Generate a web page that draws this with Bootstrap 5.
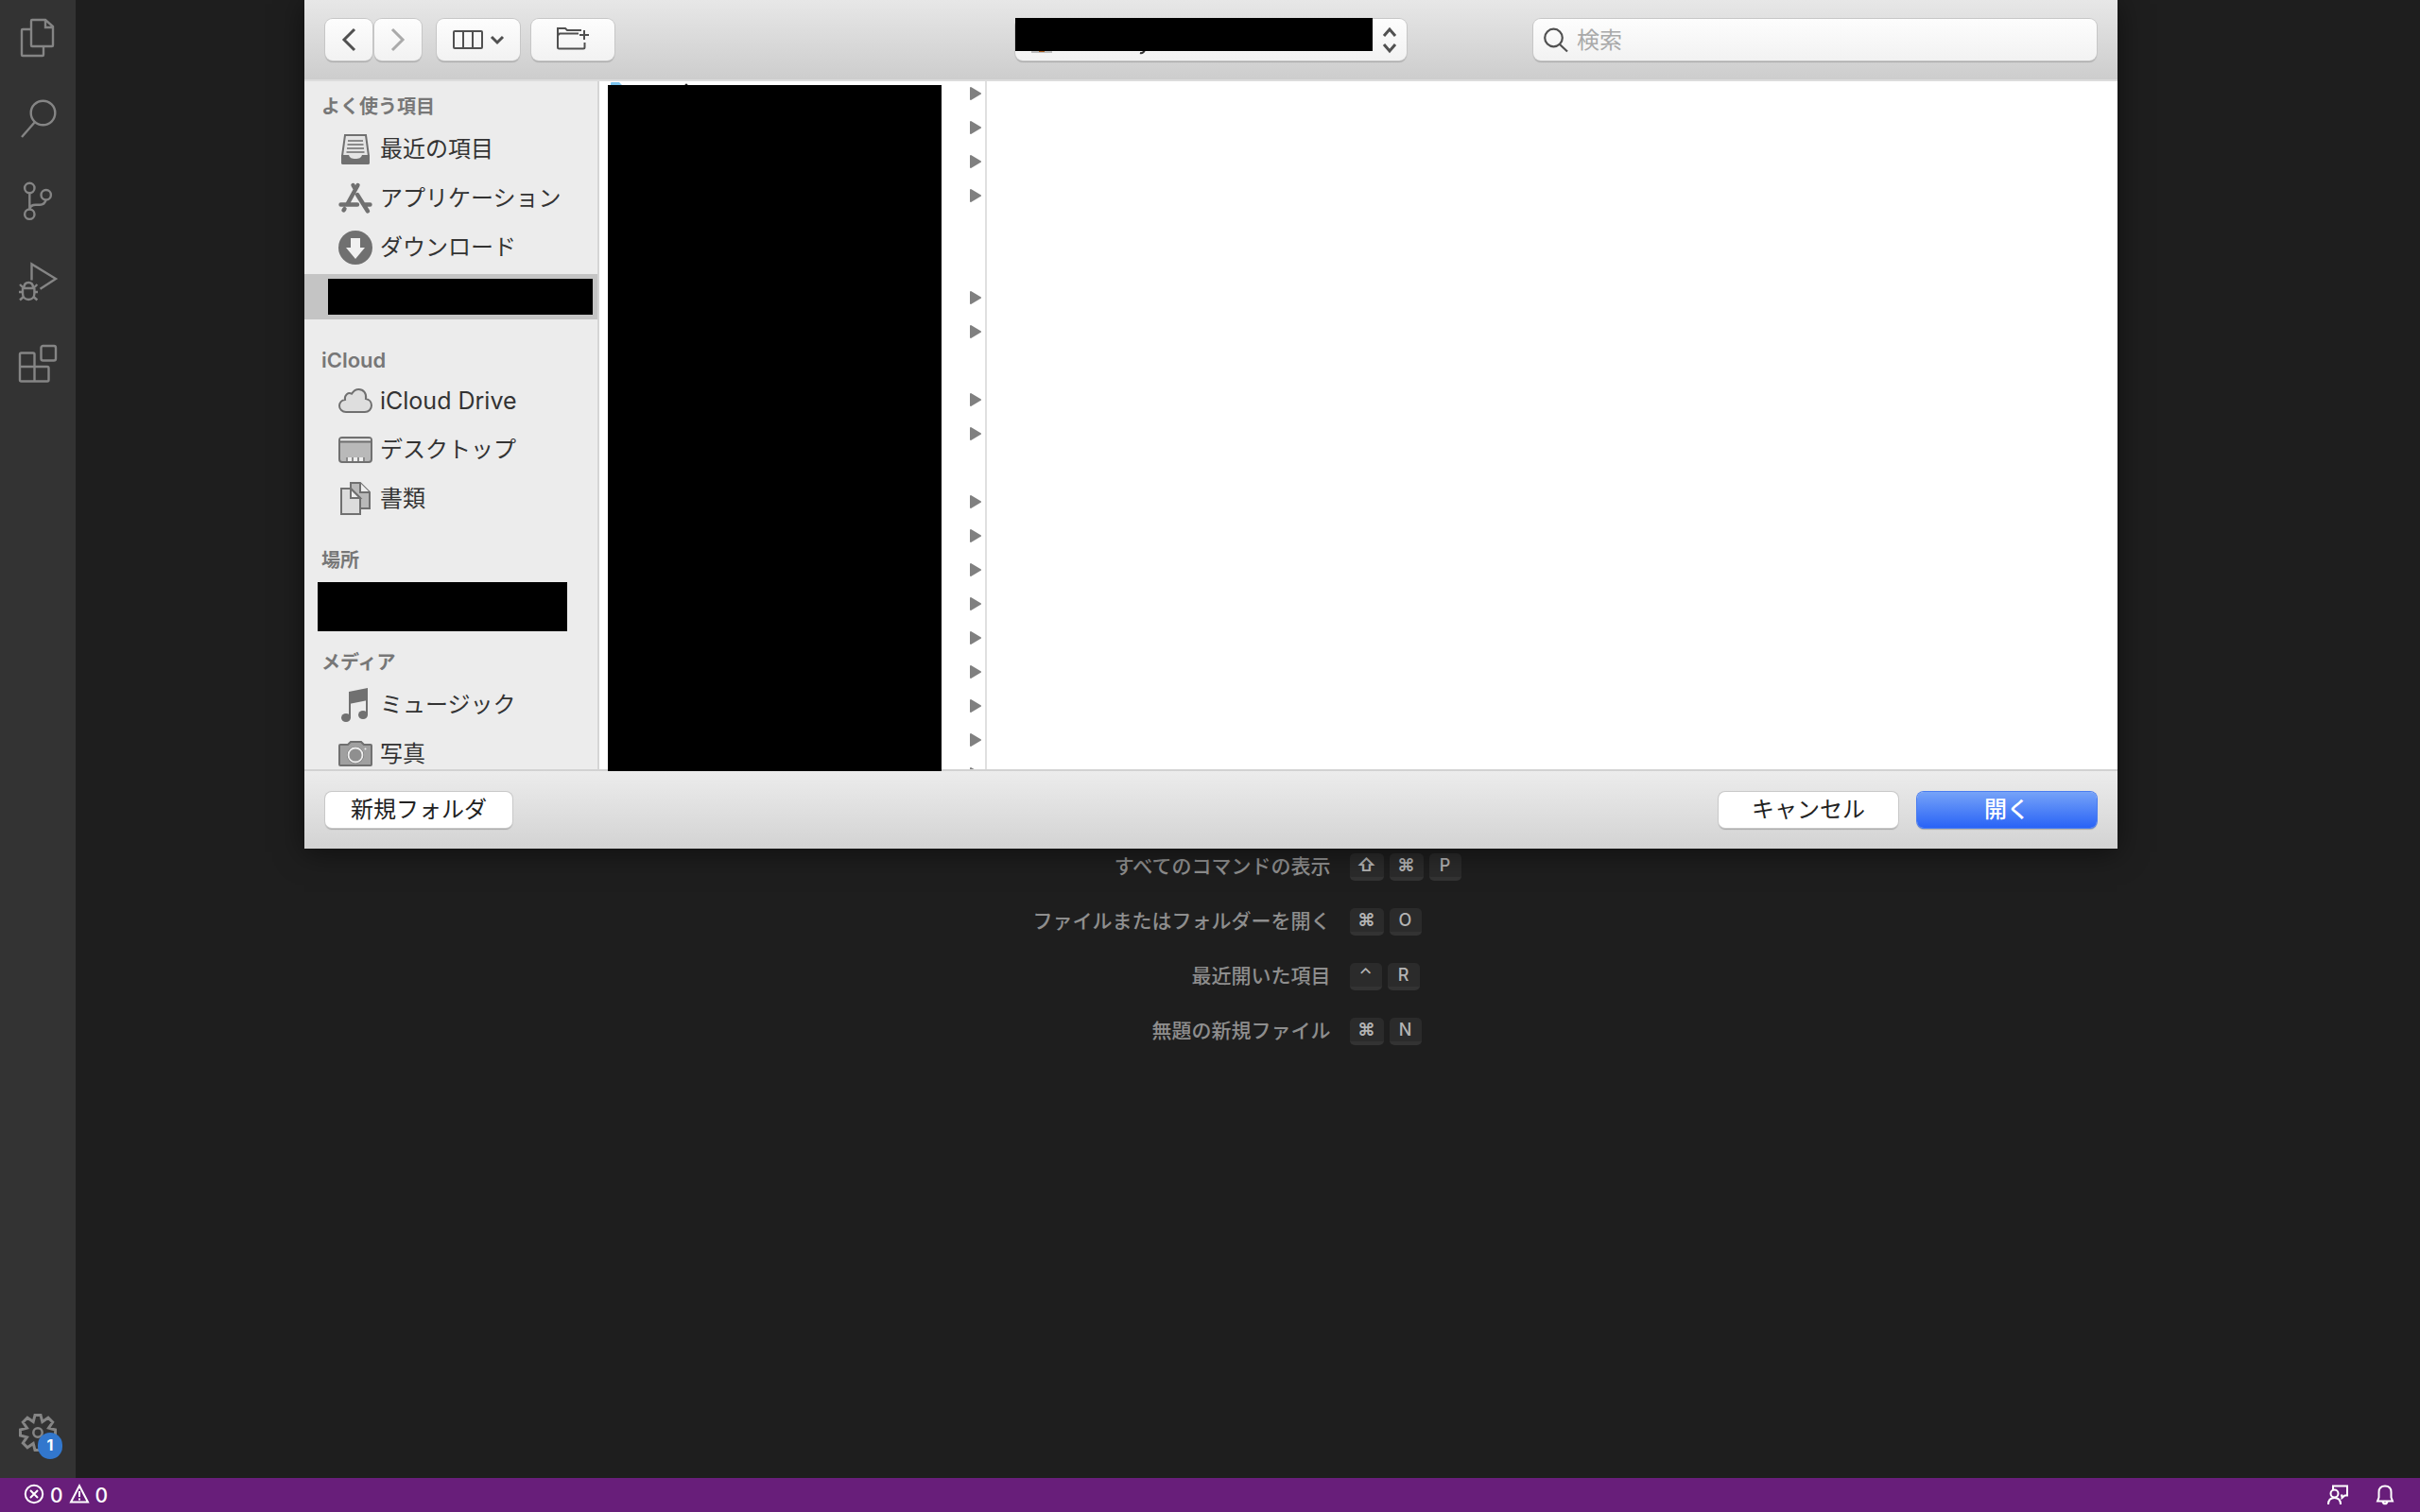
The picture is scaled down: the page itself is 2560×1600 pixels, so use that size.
<!DOCTYPE html>
<html lang="ja">
<head>
<meta charset="utf-8">
<meta name="viewport" content="width=device-width, initial-scale=1">
<title>フォルダーを開く</title>
<link href="https://cdn.jsdelivr.net/npm/bootstrap@5.3.0/dist/css/bootstrap.min.css" rel="stylesheet">
<style>
body{background:#1e1e1e;font-family:Inter,"Noto Sans CJK JP",sans-serif;font-size:24px;line-height:32px;color:#333}
svg{display:block;flex:none}
.activity{width:80px;background:#333;padding:20px 0 28px;color:#858585}
.activity nav{gap:46px}
.activity .line-icon{stroke-width:2.4}
.act-btn{background:none;border:0;padding:0;color:inherit;width:40px;height:40px;position:relative}
.act-count{position:absolute;left:20px;top:20px;width:26px;height:28px;border-radius:13px;background:#3277cd;color:#fff;font-size:16px;font-weight:700;line-height:26px;text-align:center}
.line-icon{fill:none;stroke:currentColor;stroke-width:2;overflow:visible}
.hints{padding:888px 2px 0 0;display:grid;grid-template-columns:auto auto;justify-content:center;column-gap:20px;grid-auto-rows:58px;align-items:center;color:#8e8e8e;font-size:21px;font-weight:500}
.hints dt{font-weight:500;text-align:right}
.hints dd{gap:6px}
.key{background:#2b2b2b;border-bottom:4px solid #333;border-radius:5px;color:#b4b4b4;font:500 18px/26px Inter,"DejaVu Sans",sans-serif;height:29px;padding:0;min-width:34px;text-align:center}
.key-sym{min-width:36px;font-size:19px;font-weight:700}
.status{height:36px;background:#681e7a;color:#fff;padding:0 28px 0 26px;font-size:21px}
.status-item{color:#fff;text-decoration:none;gap:7px;font-weight:500}
.status-item span{padding-top:2px}
.dialog-open{position:absolute;left:322px;right:320px;top:0;box-shadow:0 4px 28px rgba(0,0,0,.5);background:#fff;color:#333}
.toolbar{height:86px;padding:0 22px;background:linear-gradient(#e7e7e7,#cdcdcd);border-bottom:2px solid #dcdcdc}
.tools{gap:12px}
.nav-pair{gap:2px;margin-right:4px}
.mac-btn,.mac-field{background:linear-gradient(#fdfdfd,#f2f2f2);border:0;border-radius:8px;height:44px;padding:0;color:#505050;box-shadow:0 0 0 1px #c6c6c6,0 2px 1px #aaa}
.w-nav{width:50px}.w-tool{width:88px}
.place{width:414px;position:relative}
.place select{width:100%;appearance:none}
.place-mask{position:absolute;left:0;top:-1px;width:378px;height:35px;background:#000}
.place-art{position:absolute;inset:0;pointer-events:none}
.search{width:596px;padding-left:11px;gap:9px}
.search input{background:none;border:0;outline:0;padding:0;height:44px;flex:1;color:#333}
.search input::placeholder{color:#a9a9a9;opacity:1}
.browser{height:728px}
.sidebar{width:312px;background:#ececec;border-right:2px solid #d5d5d5;padding-top:8px;overflow:hidden;color:#333}
.side-head{font-size:20px;font-weight:600;line-height:38px;height:40px;margin:22px 0 0;padding-left:18px;color:#777}
.side-head:first-child{margin-top:0}
.head-latin{font-size:22px;line-height:42px}
.side-row{height:48px;margin-bottom:4px;padding-left:36px;gap:8px;color:#333;text-decoration:none}
.row-latin{font-size:25px}
.side-row.on{background:#c4c4c4;padding:0 5px 4px 25px}
.mask-row{background:#000;height:38px}
.mask-drive{background:#000;height:52px;margin:2px 32px 14px 14px}
.side-icon{color:#707070}
.column{width:410px;border-right:2px solid #e0e0e0;position:relative}
.rows{overflow:hidden;height:728px}
.rows ul{margin:-5px 0 0}
.rows li{height:36px;padding-right:4px}
.mask-files{position:absolute;left:9px;top:4px;width:353px;height:726px;background:#000}
.peek{position:absolute;left:12px;top:1px}
.dfoot{border-top:2px solid #d2d2d2;height:84px;padding:0 22px;background:linear-gradient(#ececec,#d3d3d3);gap:20px}
.mac-push{height:38px;border:0;border-radius:7px;background:#fff;color:#222;box-shadow:0 0 0 1px #c8c8c8,0 2px 1px #aaa;padding:0 27px}
.w-push{width:190px;padding:0}
.mac-primary{background:linear-gradient(#76a3f8,#2963f6);color:#fff;box-shadow:0 0 0 1px #4a7df0,0 2px 1px #aaa;font-weight:500}
</style>
</head>
<body>
<div class="vh-100 d-flex flex-column position-relative overflow-hidden">
  <div class="d-flex flex-grow-1">
    <aside class="activity d-flex flex-column align-items-center justify-content-between">
      <nav class="d-flex flex-column">
        <button class="act-btn" aria-label="エクスプローラー"><svg class="line-icon" width="40" height="40"><path d="M14 1h14l8 7v20q0 1-1 1H14q-1 0-1-1V2q0-1 1-1zM28 1v8h8M12 11H4q-1 0-1 1v26q0 1 1 1h21q1 0 1-1v-8"/></svg></button>
        <button class="act-btn" aria-label="検索"><svg class="line-icon" width="40" height="40"><circle cx="25.500" cy="13.500" r="12.800"/><path d="M17 23L3 39"/></svg></button>
        <button class="act-btn" aria-label="ソース管理"><svg class="line-icon" width="40" height="40"><circle cx="11.300" cy="7" r="5.200"/><circle cx="28.700" cy="14.200" r="5.200"/><circle cx="11.300" cy="34.700" r="5.200"/><path d="M11.300 12.200V29.500M28.700 19.400c-1 3.500-3 5.300-6.500 5.300h-4.500c-3.500 0-5.700 1-6.400 4.500"/></svg></button>
        <button class="act-btn" aria-label="実行とデバッグ"><svg class="line-icon" width="40" height="40"><path d="M13.500 18.500V1.500L39 17 22.500 27.800"/><path d="M3.500 27h13.500M4 27v5.500c0 4 2.500 6.500 6.200 6.500s6.200-2.500 6.200-6.500V27M5.300 27c0-4 2-6 4.900-6s4.900 2 4.900 6M0 31h4m12.500 0H20M1 23l3.500 3.500M19.400 23l-3.500 3.500M1 39.500L5 36m14.400 3.500l-4-3.500"/></svg></button>
        <button class="act-btn" aria-label="拡張機能"><svg class="line-icon" width="40" height="40"><path d="M2.500 9.500h12.500q1.500 0 1.500 1.500v13H30q1.500 0 1.500 1.500V38q0 1.500-1.500 1.500H2.500Q1 39.500 1 38V11q0-1.500 1.500-1.500zM1 24h15.500v15.500"/><rect x="23.500" y="2" width="15.500" height="15.500" rx="2"/></svg></button>
      </nav>
      <button class="act-btn" aria-label="管理"><svg class="line-icon" width="40" height="40"><path stroke-width="3" d="M17 1.500h6l1.800 7L31 4.300 35.700 9l-4.200 6.200 7 1.800v6l-7 1.800 4.200 6.200-4.700 4.700-6.200-4.200-1.800 7h-6l-1.800-7L9 35.700 4.300 31l4.200-6.200-7-1.800v-6l7-1.800L4.300 9 9 4.300l6.200 4.200z"/><circle cx="20" cy="20" r="4.700" stroke-width="2.500"/></svg><span class="act-count">1</span></button>
    </aside>
    <main class="flex-grow-1">
      <dl class="hints mb-0">
        <dt>すべてのコマンドの表示</dt><dd class="d-flex mb-0"><kbd class="key key-sym">⇧</kbd><kbd class="key key-sym">⌘</kbd><kbd class="key">P</kbd></dd>
        <dt>ファイルまたはフォルダーを開く</dt><dd class="d-flex mb-0"><kbd class="key key-sym">⌘</kbd><kbd class="key">O</kbd></dd>
        <dt>最近開いた項目</dt><dd class="d-flex mb-0"><kbd class="key">⌃</kbd><kbd class="key">R</kbd></dd>
        <dt>無題の新規ファイル</dt><dd class="d-flex mb-0"><kbd class="key key-sym">⌘</kbd><kbd class="key">N</kbd></dd>
      </dl>
    </main>
  </div>

  <footer class="status d-flex align-items-center justify-content-between">
    <a href="#" class="status-item d-flex align-items-center">
      <svg class="line-icon" width="20" height="22" stroke-width="1.500"><circle cx="10" cy="10" r="9.200"/><path d="M6 6l8 8M14 6l-8 8"/></svg><span>0</span>
      <svg class="line-icon" width="20" height="22" stroke-width="1.500"><path d="M10 1.200L19 18.500H1zM10 7v6M10 14.500v2"/></svg><span>0</span>
    </a>
    <div class="d-flex gap-4">
      <a href="#" class="status-item" aria-label="フィードバック"><svg class="line-icon" width="28" height="22"><path d="M6 5V1.500h15v10h-2.500L15.500 14v-2.500H14"/><circle cx="7.500" cy="9.500" r="4"/><path d="M1 21c0-4.500 2.500-7 6.500-7s6.500 2.500 6.500 7"/></svg></a>
      <a href="#" class="status-item" aria-label="通知"><svg class="line-icon" width="18" height="22"><path d="M1 17.500l1.500-4V8c0-4.300 2.500-6.500 6.500-6.500S15.500 3.700 15.500 8v5.500l1.500 4zM6.500 18c.5 3 4.500 3 5 0"/></svg></a>
    </div>
  </footer>

  <section class="dialog-open" role="dialog" aria-label="開く">
    <header class="toolbar d-flex align-items-center">
      <div class="tools d-flex flex-fill" style="flex-basis:0!important">
        <div class="nav-pair d-flex">
          <button class="mac-btn w-nav d-flex align-items-center justify-content-center" aria-label="戻る"><svg class="line-icon" width="16" height="26" style="stroke-width:3"><path d="M14 2L3 13l11 11"/></svg></button>
          <button class="mac-btn w-nav d-flex align-items-center justify-content-center" aria-label="進む" disabled><svg class="line-icon" width="16" height="26" style="stroke-width:3;color:#aaa"><path d="M2 2l11 11L2 24"/></svg></button>
        </div>
        <button class="mac-btn w-tool d-flex align-items-center justify-content-center gap-2" aria-label="表示"><svg class="line-icon" width="32" height="20"><rect x="1" y="1" width="30" height="18" rx="1"/><path d="M11 1v18M21 1v18"/></svg><svg class="line-icon" width="14" height="10" style="stroke-width:3"><path d="M1 2l6 6 6-6"/></svg></button>
        <button class="mac-btn w-tool d-flex align-items-center justify-content-center" aria-label="新規フォルダを作成"><svg class="line-icon" width="36" height="28"><path d="M27 4H12L10 2H2v20q0 1.500 1.500 1.500H29q1.500 0 1.500-1.500v-5M2 9.500l2-2h20M30 4v10M25 9h10"/></svg></button>
      </div>
      <div class="place">
        <select class="mac-btn" aria-label="場所"><option></option></select>
        <svg class="place-art line-icon" width="414" height="44" style="color:#505050;stroke-width:3"><path d="M390 18l6-7 6 7M390 27l6 7 6-7"/><path d="M17 35h22" stroke="#bbb" stroke-width="2"/><path d="M25 34h6" stroke="#a85a1c" stroke-width="2"/><path d="M132 36q3 1 5-3" stroke="#333" stroke-width="2"/></svg>
        <span class="place-mask"></span>
      </div>
      <div class="d-flex flex-fill justify-content-end" style="flex-basis:0!important">
        <label class="mac-field search d-flex align-items-center"><svg class="line-icon" width="26" height="26" style="stroke-width:2.200"><circle cx="10.500" cy="11" r="9.300"/><path d="M17 18l8 7.500"/></svg><input type="search" placeholder="検索" aria-label="検索"></label>
      </div>
    </header>

    <div class="browser d-flex">
      <nav class="sidebar flex-shrink-0">
        <h6 class="side-head">よく使う項目</h6>
        <a href="#" class="side-row d-flex align-items-center"><svg class="side-icon" width="36" height="36"><path d="M7 3h22l3 22v7q0 1-1 1H5q-1 0-1-1v-7z" fill="#e4e4e4" stroke="currentColor" stroke-width="2"/><path d="M10 9h16M9.500 13h17M9 17h18M8.500 21h19" stroke="#8a8a8a" stroke-width="2"/><path d="M3 24h8c1 3 3 4 7 4s6-1 7-4h8v8q0 2-2 2H5q-2 0-2-2z" fill="currentColor"/></svg>最近の項目</a>
        <a href="#" class="side-row d-flex align-items-center"><svg class="side-icon" width="36" height="36" fill="none" stroke="currentColor" stroke-width="4.400" stroke-linecap="round"><path d="M20.500 4L10 23M2.500 24.500H20M5.500 30.500l1-1.500M15.500 4l2 3.500M20 14l11 17.500M27 24.500h6.500"/></svg>アプリケーション</a>
        <a href="#" class="side-row d-flex align-items-center"><svg class="side-icon" width="36" height="36"><circle cx="18" cy="18" r="18" fill="currentColor"/><path d="M13 8h10v10h5L18 30 8 18h5z" fill="#f0f0f0"/></svg>ダウンロード</a>
        <a href="#" class="side-row on d-flex align-items-center" aria-label="ホーム"><span class="mask-row flex-grow-1 mt-1"></span></a>
        <h6 class="side-head head-latin">iCloud</h6>
        <a href="#" class="side-row row-latin d-flex align-items-center"><svg class="side-icon" width="36" height="36"><path d="M8 30C4 30 1 27 1 23.500c0-3.300 2.500-6 6-6.500-1-5 3.500-8.500 7-6.300C16 7.500 18.500 6 21.500 6c5 0 8.500 4.500 7.500 10 3.500.5 6 3.500 6 7 0 4-3 7-7 7z" fill="#dedede" stroke="currentColor" stroke-width="2"/></svg>iCloud Drive</a>
        <a href="#" class="side-row d-flex align-items-center"><svg class="side-icon" width="36" height="36"><rect x="1" y="5" width="34" height="26" rx="3" fill="#b9b9b9" stroke="currentColor" stroke-width="2"/><path d="M2 7.500h32" stroke="#eee" stroke-width="2"/><path d="M1 9.500h34" stroke="currentColor" stroke-width="2"/><path d="M8 30v-4h20v4" fill="#8a8a8a"/><path d="M10 28h4m2 0h4m2 0h4" stroke="#eee" stroke-width="4"/></svg>デスクトップ</a>
        <a href="#" class="side-row d-flex align-items-center"><svg class="side-icon" width="36" height="36" stroke="currentColor" stroke-width="2"><path d="M13 1h10l10 10v17H13z" fill="#b9b9b9"/><path d="M23 1v10h10" fill="#eee"/><path d="M3 7h10l10 10v17H3z" fill="#dcdcdc"/><path d="M13 7v10h10z" fill="#eee"/></svg>書類</a>
        <h6 class="side-head">場所</h6>
        <div class="mask-drive"></div>
        <h6 class="side-head mt-0">メディア</h6>
        <a href="#" class="side-row d-flex align-items-center"><svg class="side-icon" width="36" height="36" fill="currentColor"><path d="M11 4l20-4v13l-20 4z"/><path d="M11 4h2v28h-2zM29 2h2v27h-2z"/><ellipse cx="8" cy="31.500" rx="5" ry="4.500"/><ellipse cx="26" cy="28.500" rx="5" ry="4.500"/></svg>ミュージック</a>
        <a href="#" class="side-row d-flex align-items-center"><svg class="side-icon" width="36" height="36"><path d="M1 9q0-1 1-1h8l3-3h11l3 3h7q1 0 1 1v20q0 1-1 1H2q-1 0-1-1z" fill="#a0a0a0" stroke="currentColor" stroke-width="2"/><circle cx="18" cy="19" r="9" fill="#707070"/><circle cx="18" cy="19" r="7.500" fill="#8f8f8f" stroke="#eee" stroke-width="1.800"/><circle cx="28.500" cy="12.500" r="1" fill="#eee"/></svg>写真</a>
      </nav>
      <div class="column flex-shrink-0">
        <svg class="peek" width="90" height="4"><path d="M0 4V1q0-1 1-1h8l3 3h17v1z" fill="#7cc4ee"/><circle cx="80" cy="3" r="1.500" fill="#222"/></svg>
        <div class="rows"><ul class="list-unstyled" id="fileRows"></ul></div>
        <div class="mask-files"></div>
      </div>
      <div class="flex-grow-1 bg-white"></div>
    </div>

    <footer class="dfoot d-flex align-items-center">
      <button class="mac-push me-auto">新規フォルダ</button>
      <button class="mac-push w-push">キャンセル</button>
      <button class="mac-push w-push mac-primary">開く</button>
    </footer>
  </section>
</div>
<script src="https://cdn.jsdelivr.net/npm/bootstrap@5.3.0/dist/js/bootstrap.bundle.min.js"></script>
<script>
// Rows that are folders carry a disclosure arrow; plain files have none.
const plainFiles = [4, 5, 8, 11];
const arrow = '<svg width="12" height="14"><path d="M1 1l10 6-10 6z" fill="#808080" stroke="#808080" stroke-width="2" stroke-linejoin="round"/></svg>';
document.getElementById('fileRows').innerHTML = Array.from({length: 21}, (_, i) =>
  `<li class="d-flex align-items-center justify-content-end">${plainFiles.includes(i) ? '' : arrow}</li>`).join('');
</script>
</body>
</html>
